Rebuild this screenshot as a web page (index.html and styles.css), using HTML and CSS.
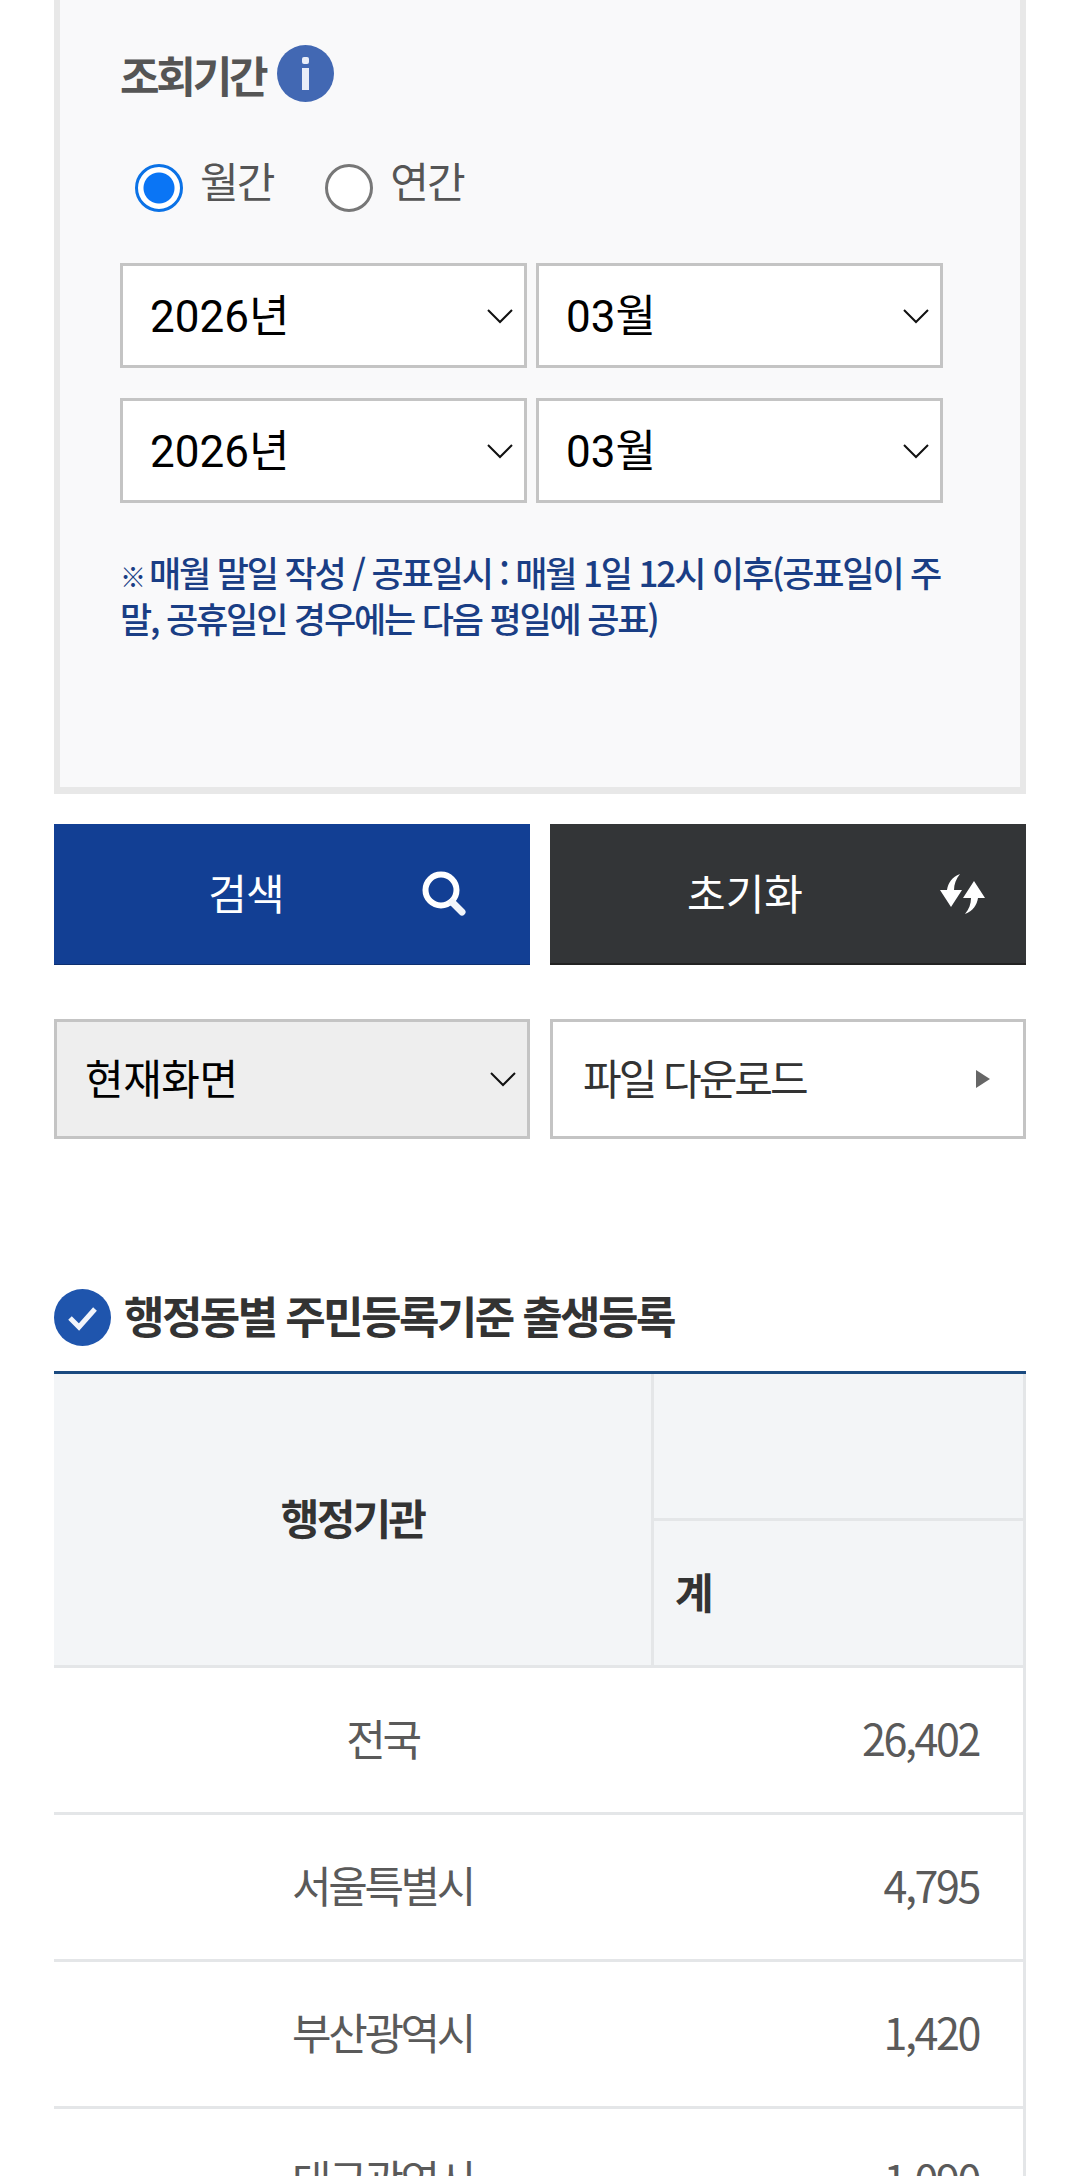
FILE: index.html
```html
<!DOCTYPE html>
<html lang="ko">
<head>
    <meta charset="UTF-8">
    <meta name="viewport" content="width=device-width, initial-scale=1.0">
    <title>행정동별 주민등록기준 출생등록</title>
    <link rel="stylesheet" href="styles.css">
</head>
<body>
    <div class="page">
        <div class="search-box">
            <div class="box-title">
                <span>조회기간</span>
                <svg class="info-icon" viewBox="0 0 57 57">
                    <circle cx="28.5" cy="28.5" r="28.5" fill="#4268b3"/>
                    <rect x="25" y="12" width="7" height="7" rx="2" fill="#e8edf8"/>
                    <rect x="25" y="23" width="7" height="22" fill="#e8edf8"/>
                </svg>
            </div>
            <div class="radio-row">
                <label class="radio-item"><span class="radio checked"></span>월간</label>
                <label class="radio-item"><span class="radio"></span>연간</label>
            </div>
            <div class="select-row">
                <div class="select">2026년
                    <svg class="chevron" viewBox="0 0 26 15"><path d="M1 1l12 12L25 1"/></svg>
                </div>
                <div class="select">03월
                    <svg class="chevron" viewBox="0 0 26 15"><path d="M1 1l12 12L25 1"/></svg>
                </div>
            </div>
            <div class="select-row">
                <div class="select">2026년
                    <svg class="chevron" viewBox="0 0 26 15"><path d="M1 1l12 12L25 1"/></svg>
                </div>
                <div class="select">03월
                    <svg class="chevron" viewBox="0 0 26 15"><path d="M1 1l12 12L25 1"/></svg>
                </div>
            </div>
            <p class="notice"><span class="mark">※</span>매월 말일 작성 / 공표일시 : 매월 1일 12시 이후(공표일이 주말, 공휴일인 경우에는 다음 평일에 공표)</p>
        </div>

        <div class="btn-row">
            <button class="btn btn-search">검색
                <svg class="btn-icon icon-search" viewBox="0 0 44 45">
                    <circle cx="19" cy="19" r="15.5" fill="none" stroke="#fff" stroke-width="6"/>
                    <path d="M30 31l10 10" stroke="#f1f5fb" stroke-width="7" stroke-linecap="round"/>
                </svg>
            </button>
            <button class="btn btn-reset">초기화
                <svg class="btn-icon icon-reset" viewBox="0 0 45 40">
                    <path d="M20 0C12 3 8 9 7 16H0L11 33 22 16H14C14 10 16 5 20 0Z" fill="#fff"/>
                    <path d="M25 40C33 37 37 31 38 24H45L34 7 23 24H31C31 30 29 35 25 40Z" fill="#fff"/>
                </svg>
            </button>
        </div>

        <div class="tool-row">
            <div class="tool-select">현재화면
                <svg class="chevron" viewBox="0 0 26 15"><path d="M1 1l12 12L25 1"/></svg>
            </div>
            <div class="tool-link">파일 다운로드
                <span class="arrow"></span>
            </div>
        </div>

        <h2 class="section-title">
            <svg class="check-icon" viewBox="0 0 57 57">
                <circle cx="28.5" cy="28.5" r="28.5" fill="#1f55ad"/>
                <path d="M16 29l9 9 16-18" fill="none" stroke="#f2f5fb" stroke-width="5"/>
            </svg>
            <span class="section-text">행정동별 주민등록기준 출생등록</span>
        </h2>

        <table class="data-table">
            <thead>
                <tr class="head-top">
                    <th rowspan="2" class="col-name">행정기관</th>
                    <th></th>
                </tr>
                <tr class="head-sub">
                    <th class="col-total">계</th>
                </tr>
            </thead>
            <tbody>
                <tr><td class="name">전국</td><td class="num">26,402</td></tr>
                <tr><td class="name">서울특별시</td><td class="num">4,795</td></tr>
                <tr><td class="name">부산광역시</td><td class="num">1,420</td></tr>
                <tr><td class="name">대구광역시</td><td class="num">1,090</td></tr>
            </tbody>
        </table>
    </div>
</body>
</html>
```

FILE: styles.css
```css
* {
    margin: 0;
    padding: 0;
    box-sizing: border-box;
}

html, body {
    height: 100vh;
    overflow: hidden;
    background: #fff;
}

body {
    font-family: "Noto Sans CJK KR", "Noto Sans", sans-serif;
    color: #333;
}

.page {
    padding: 0 54px;
}

/* search box */
.search-box {
    height: 794px;
    padding: 45px 70px 0 60px;
    background: #f9f9fa;
    border: 6px solid #e8e8e8;
    border-top: 0;
    border-bottom-width: 7px;
}

.box-title {
    display: flex;
    align-items: center;
    gap: 12px;
    height: 57px;
    font-size: 43px;
    font-weight: 700;
    letter-spacing: -3.2px;
    color: #555;
}

.info-icon {
    width: 57px;
    height: 57px;
}

.radio-row {
    display: flex;
    gap: 52px;
    margin-top: 62px;
    padding-left: 15px;
}

.radio-item {
    display: flex;
    align-items: flex-start;
    gap: 17px;
    height: 48px;
    font-size: 42px;
    line-height: 31px;
    letter-spacing: -2px;
    color: #555;
}

.radio {
    width: 48px;
    height: 48px;
    border: 3px solid #777;
    border-radius: 50%;
    background: #fff;
}

.radio.checked {
    border-color: #0b72e6;
    background: radial-gradient(circle, #0a75f5 0, #0a75f5 15px, #fff 16px);
}

.select-row {
    display: flex;
    gap: 9px;
    margin-top: 30px;
}

.radio-row + .select-row {
    margin-top: 51px;
}

.select {
    position: relative;
    display: flex;
    align-items: center;
    width: 407px;
    height: 105px;
    padding: 0 0 6px 27px;
    background: #fff;
    border: 3px solid #c4c4c4;
    font-family: Roboto, "Noto Sans CJK KR", sans-serif;
    font-size: 44px;
    color: #000;
}

.chevron {
    position: absolute;
    right: 11px;
    top: 50%;
    width: 26px;
    height: 15px;
    margin-top: -7px;
    fill: none;
    stroke: #111;
    stroke-width: 2;
}

.notice {
    margin-top: 46px;
    font-size: 35px;
    font-weight: 500;
    line-height: 46px;
    letter-spacing: -2.15px;
    color: #1a3e85;
}

.mark {
    display: inline-block;
    margin-right: 3px;
    font-size: 26px;
    font-weight: 700;
    line-height: 1;
    letter-spacing: 0;
}

/* buttons */
.btn-row {
    display: flex;
    gap: 20px;
    margin-top: 30px;
}

.btn {
    position: relative;
    width: 476px;
    height: 141px;
    padding: 0 92px 6px 0;
    border: 0;
    font-family: inherit;
    font-size: 42px;
    letter-spacing: -1px;
    color: #fff;
}

.btn-search {
    background: #123f94;
    border-bottom: 1px solid #0d2f70;
}

.btn-reset {
    padding: 0 86px 4px 0;
    background: #333537;
    border-bottom: 2px solid #222;
    letter-spacing: 0;
}

.btn-icon {
    position: absolute;
    top: 50%;
}

.icon-search {
    right: 64px;
    width: 44px;
    height: 45px;
    margin-top: -23px;
}

.icon-reset {
    right: 41px;
    width: 45px;
    height: 40px;
    margin-top: -20px;
}

.tool-row {
    display: flex;
    gap: 20px;
    margin-top: 54px;
}

.tool-select,
.tool-link {
    position: relative;
    display: flex;
    align-items: center;
    width: 476px;
    height: 120px;
    padding: 0 0 6px 28px;
    border: 3px solid #c4c4c4;
    font-size: 42px;
}

.tool-select {
    background: #eee;
    color: #000;
    letter-spacing: -0.5px;
}

.tool-link {
    padding-left: 30px;
    background: #fff;
    color: #333;
    letter-spacing: -3px;
}

.arrow {
    position: absolute;
    right: 33px;
    top: 50%;
    margin-top: -9px;
    border-left: 14px solid #666;
    border-top: 9px solid transparent;
    border-bottom: 9px solid transparent;
}

/* table */
.section-title {
    display: flex;
    align-items: center;
    gap: 13px;
    height: 57px;
    margin-top: 150px;
    font-size: 44px;
    font-weight: 700;
    letter-spacing: -2.6px;
    color: #333;
}

.section-text {
    padding-bottom: 6px;
}

.check-icon {
    width: 57px;
    height: 57px;
}

.data-table {
    width: 972px;
    margin-top: 25px;
    table-layout: fixed;
    border-collapse: separate;
    border-spacing: 0;
    border-top: 3px solid #1a4a80;
}

.data-table th {
    padding-bottom: 6px;
    background: #f3f5f7;
    border-right: 3px solid #e4e6e8;
    border-bottom: 3px solid #e4e6e8;
    font-size: 42px;
    font-weight: 700;
    letter-spacing: -2.8px;
    color: #333;
}

.col-name {
    width: 600px;
}

.head-top {
    height: 147px;
}

.head-sub {
    height: 147px;
}

.data-table th.col-total {
    padding-left: 21px;
    text-align: left;
}

.data-table td {
    height: 147px;
    padding-bottom: 6px;
    border-bottom: 3px solid #e4e6e8;
    font-size: 43px;
    letter-spacing: -3.4px;
    color: #5a5a5a;
}

.name {
    padding-left: 57px;
    text-align: center;
}

.data-table .num {
    padding-right: 44px;
    text-align: right;
    letter-spacing: -2.4px;
    border-right: 3px solid #e4e6e8;
}
```
